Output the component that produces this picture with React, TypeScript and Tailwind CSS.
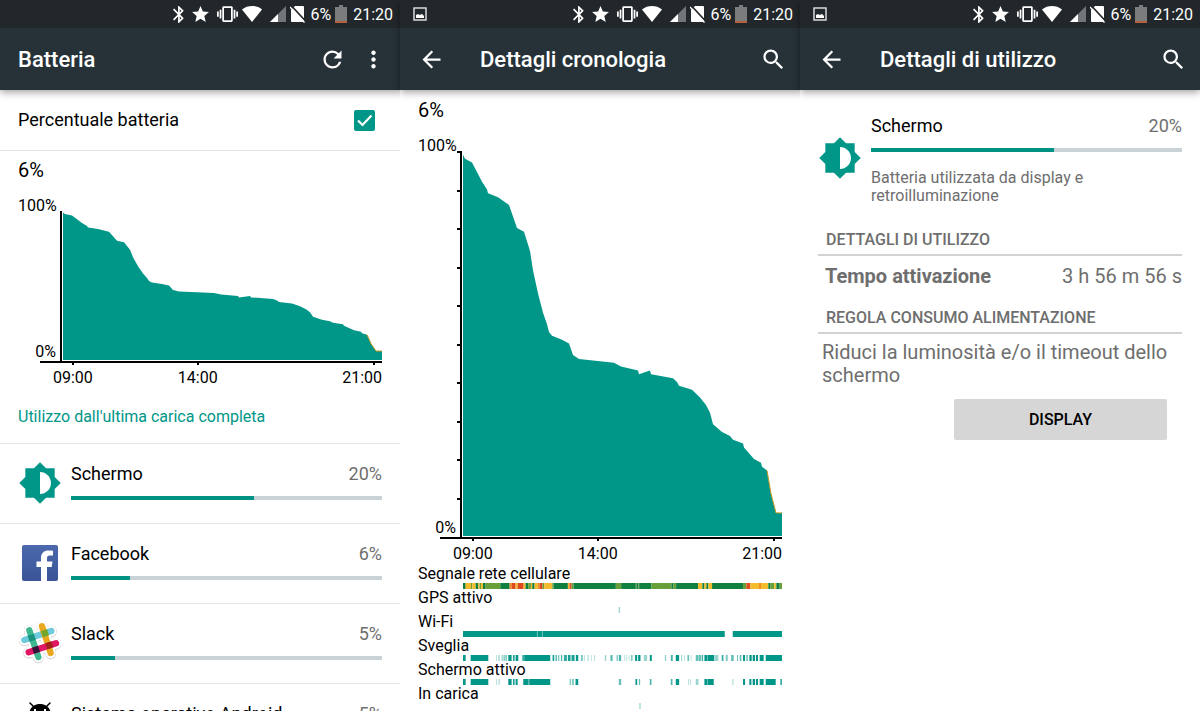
import React, { useState } from 'react';
import { MdArrowBack, MdBrightness6, MdMoreVert, MdRefresh, MdSearch } from 'react-icons/md';

// [position on the time axis, battery level in %]
const LEVELS: [number, number][] = [
  [0, 99], [2, 98], [9, 97], [15, 94], [19, 92], [24, 90], [25, 89], [35, 88], [46, 86], [50, 83],
  [54, 80], [61, 79], [67, 74], [70, 69], [75, 63], [80, 58], [84, 55], [86, 53], [89, 52], [99, 51],
  [106, 50], [110, 47], [116, 46], [151, 45], [158, 44], [175, 43], [176, 42], [187, 43], [188, 42],
  [210, 41], [214, 40], [216, 39], [229, 38], [237, 36], [243, 34], [247, 32], [250, 29], [259, 27],
  [267, 26], [270, 25], [280, 24], [281, 23], [291, 20], [298, 19], [299, 18], [304, 17], [308, 11],
  [309, 10], [313, 6], [319, 6],
];

const AXIS_STEPS = [0, 1, 2, 3, 4, 5, 6, 7, 8, 9];

const TIMELINE_END = 958;

const SIGNAL_COLORS: Record<string, string> = {
  g: '#0f8040',
  l: '#689f38',
  y: '#f4bc2c',
  o: '#ef8a24',
  r: '#dd4a20',
};

const SIGNAL: [number, string][] = [
  [0, 'g'], [8, 'y'], [24, 'l'], [28, 'y'], [38, 'g'], [46, 'y'], [50, 'l'], [54, 'y'], [60, 'g'],
  [68, 'l'], [112, 'g'], [140, 'o'], [146, 'r'], [158, 'y'], [164, 'r'], [182, 'y'], [188, 'g'],
  [196, 'l'], [204, 'y'], [208, 'g'], [215, 'y'], [225, 'o'], [230, 'r'], [239, 'l'], [244, 'y'],
  [268, 'l'], [272, 'g'], [315, 'y'], [320, 'r'], [326, 'l'], [332, 'g'], [459, 'l'], [475, 'g'],
  [519, 'l'], [521, 'g'], [527, 'l'], [529, 'g'], [566, 'l'], [626, 'g'], [632, 'l'], [640, 'g'],
  [706, 'y'], [719, 'g'], [725, 'y'], [731, 'g'], [737, 'y'], [748, 'g'], [841, 'l'], [851, 'r'],
  [863, 'y'], [889, 'o'], [895, 'y'], [917, 'g'], [923, 'l'], [935, 'y'], [941, 'g'], [951, 'l'],
];

// [start, width, opacity]
type Span = [number, number, number];

const GPS: Span[] = [[468, 3, 0.5]];
const CHARGING: Span[] = [[530, 3, 0.5]];
const WIFI: Span[] = [[0, 222, 1], [222, 2, 0.6], [224, 13, 1], [237, 2, 0.6], [239, 547, 1], [810, 148, 1]];
const AWAKE: Span[] = [
  [0, 8, 1], [23, 53, 1], [100, 2, 0.4], [106, 4, 0.4], [116, 3, 0.5], [122, 3, 0.7], [128, 3, 0.8],
  [136, 10, 1], [150, 5, 0.9], [158, 8, 1], [178, 6, 0.8], [184, 78, 1], [269, 5, 0.9], [278, 4, 0.7],
  [286, 3, 0.7], [294, 4, 0.7], [303, 9, 0.8], [315, 8, 0.9], [326, 9, 0.9], [339, 7, 1], [354, 6, 0.5],
  [364, 2, 0.4], [374, 3, 0.4], [384, 2, 0.4], [394, 2, 0.4], [426, 4, 0.4],
  [443, 6, 0.7], [461, 4, 0.5], [468, 7, 0.7], [485, 2, 0.4], [491, 2, 0.4], [498, 2, 0.4],
  [505, 4, 0.6], [517, 6, 1], [526, 7, 1], [543, 10, 0.4], [561, 6, 1], [606, 4, 0.4], [624, 6, 0.7],
  [639, 10, 1], [655, 3, 0.4], [664, 2, 0.4], [674, 5, 0.6], [684, 2, 0.4], [699, 8, 0.6],
  [708, 7, 0.6], [717, 4, 0.8], [725, 8, 1], [734, 20, 1], [755, 12, 0.4], [777, 5, 0.8],
  [789, 6, 0.5], [805, 8, 0.6], [823, 3, 0.6], [831, 5, 0.6], [841, 6, 1], [851, 4, 0.7],
  [860, 7, 1], [870, 7, 1], [880, 6, 1], [891, 12, 1], [909, 49, 1],
];
const SCREEN_ON: Span[] = [
  [0, 8, 1], [23, 53, 1], [100, 2, 0.4], [107, 3, 0.4], [136, 10, 1], [150, 5, 0.9], [158, 6, 1],
  [181, 15, 1], [196, 3, 0.7], [199, 63, 1], [320, 4, 0.5], [327, 6, 0.5], [338, 8, 1], [468, 7, 0.6],
  [518, 5, 1], [528, 4, 0.6], [561, 5, 0.7], [624, 5, 0.7], [639, 10, 1], [676, 2, 0.4], [683, 2, 0.4],
  [699, 8, 0.4], [725, 8, 1], [734, 19, 1], [809, 3, 0.4], [841, 6, 1], [860, 6, 1], [870, 7, 1],
  [880, 6, 1], [891, 12, 1], [909, 30, 1], [953, 5, 0.8],
];

const StatusBar: React.FC<{ screenshot?: boolean }> = ({ screenshot }) => (
  <div className="flex h-7 items-center gap-1 bg-[#22272b] pl-[13px] pr-[7px] text-white">
    {screenshot && (
      <svg width="14" height="14" viewBox="0 0 14 14" fill="none" aria-hidden="true">
        <rect x="1" y="1" width="12" height="12" stroke="#e4e6e7" strokeWidth="1.4" />
        <path d="M3 11V8l2-1 1.500 1L9 7l2 2v2z" fill="#fff" />
      </svg>
    )}
    <div className="ml-auto flex items-center gap-2" aria-hidden="true">
      <svg width="11" height="17" viewBox="5 2 13 20" fill="currentColor">
        <path d="M17.71 7.710L12 2h-1v7.590L6.410 5 5 6.410 10.590 12 5 17.590 6.410 19 11 14.410V22h1l5.710-5.710-4.300-4.290 4.300-4.290zM13 5.830l1.880 1.880L13 9.590V5.830zm1.880 10.460L13 18.170v-3.760l1.880 1.880z" />
      </svg>
      <svg width="17" height="16" viewBox="2 2 20 19" fill="currentColor">
        <path d="M12 17.270L18.180 21l-1.640-7.030L22 9.240l-7.190-.61L12 2 9.190 8.630 2 9.240l5.460 4.730L5.820 21z" />
      </svg>
      <div className="flex items-center gap-1">
        <svg width="21" height="16" viewBox="0 3 24 18" fill="currentColor">
          <path d="M0 15h2V9H0v6zm3 2h2V7H3v10zm19-8v6h2V9h-2zm-3 8h2V7h-2v10zM16.500 3h-9C6.670 3 6 3.670 6 4.500v15c0 .83.67 1.500 1.500 1.500h9c.83 0 1.500-.67 1.500-1.500v-15c0-.83-.67-1.500-1.500-1.500zM16 19H8V5h8v14z" />
        </svg>
        <svg width="20" height="16" viewBox="0 0 20 16" fill="currentColor">
          <path d="M10 16L0 3.500C3 1 6.500 0 10 0s7 1 10 3.500z" />
        </svg>
      </div>
      <svg width="16" height="16" viewBox="0 0 16 16">
        <path d="M16 0v16H0z" fill="#71767a" />
        <path d="M8 8v8H0z" fill="#fff" />
      </svg>
    </div>
    <svg width="15" height="17" viewBox="0 0 15 17" aria-hidden="true">
      <path d="M5 0h8q1 0 1 1v15H2q-1 0-1-1V4z" fill="#fff" />
      <path d="M1.500 0L15.500 15" stroke="#22272b" strokeWidth="1.800" />
      <path d="M0 1L14.500 16.500" stroke="#fff" strokeWidth="1.300" />
    </svg>
    <span className="ml-px pt-px text-base leading-none">6%</span>
    <svg width="12" height="18" viewBox="0 0 12 18" aria-hidden="true">
      <path d="M4 0h4v2h4v16H0V2h4z" fill="#7a7c7e" />
      <path d="M0 16h12v2H0z" fill="#b5623c" />
    </svg>
    <span className="ml-[2px] pt-px text-base leading-none">21:20</span>
  </div>
);

interface ScreenProps {
  title: string;
  back?: boolean;
  actions: React.ReactNode;
  children: React.ReactNode;
}

const Screen: React.FC<ScreenProps> = ({ title, back, actions, children }) => (
  <section className="min-w-0 bg-white">
    <header className="shadow-[0_2px_8px_rgba(0,0,0,0.4)]">
      <StatusBar screenshot={back} />
      <div className="flex h-[62px] items-center bg-[#263238] pl-[18px] pr-[13px] text-white">
        {back && (
          <button type="button" aria-label="Indietro" className="mr-[35px]">
            <MdArrowBack size={27} />
          </button>
        )}
        <h1 className="flex-1 truncate text-[22px] font-medium">{title}</h1>
        <div className="flex gap-[14px]">{actions}</div>
      </div>
    </header>
    {children}
  </section>
);

const SearchButton = () => (
  <button type="button" aria-label="Cerca">
    <MdSearch size={27} />
  </button>
);

const BatteryChart: React.FC<{ height: number; ticks?: boolean }> = ({ height, ticks }) => {
  const scale = (height - 1) / 100;
  const points = LEVELS.map(([x, level]) => [x + 7, height - 1 - level * scale]);
  const line = points.map((p) => p.join(' ')).join(' L');
  const low = points.slice(-5).map((p) => p.join(' ')).join(' L');

  return (
    <figure className="px-[18px] text-base">
      <div className="flex items-stretch">
        <div className="flex w-[38px] flex-col justify-between text-right leading-[18px]">
          <span>100%</span>
          <span>0%</span>
        </div>
        <svg
          className="mt-[14px] min-w-0 flex-1"
          height={height}
          viewBox={`0 0 326 ${height}`}
          preserveAspectRatio="none"
          aria-label="Livello batteria"
        >
          <path d={`M7 ${height - 1} L${line} L326 ${height - 1} Z`} fill="#009688" />
          <path d={`M${low}`} fill="none" stroke="#c49a25" strokeWidth="1" />
          <rect x="4" y="0" width="2" height={height} fill="#000" />
          {ticks &&
            AXIS_STEPS.map((step) => (
              <rect key={step} x="1" y={Math.round(step * 10 * scale)} width="3" height="2" fill="#000" />
            ))}
        </svg>
      </div>
      <div className="ml-[22px] h-[2px] bg-black" />
      <svg className="block w-full pl-[38px]" height="2" viewBox="0 0 326 2" preserveAspectRatio="none" aria-hidden="true">
        <path d="M16 0h2v2h-2zM141 0h2v2h-2zM317 0h2v2h-2z" />
      </svg>
      <div className="flex pl-[35px] pt-[3px] leading-5">
        <span>09:00</span>
        <span className="ml-[85px]">14:00</span>
        <span className="ml-auto">21:00</span>
      </div>
    </figure>
  );
};

const SignalBar = () => (
  <svg className="block w-full" height="6" viewBox={`0 0 ${TIMELINE_END} 6`} preserveAspectRatio="none" aria-hidden="true">
    {SIGNAL.map(([start, color], i) => {
      const end = i < SIGNAL.length - 1 ? SIGNAL[i + 1][0] : TIMELINE_END;
      return <rect key={start} x={start} y="0" width={end - start} height="6" fill={SIGNAL_COLORS[color]} />;
    })}
  </svg>
);

const SpanBar: React.FC<{ spans: Span[] }> = ({ spans }) => (
  <svg className="block w-full" height="6" viewBox={`0 0 ${TIMELINE_END} 6`} preserveAspectRatio="none" aria-hidden="true">
    {spans.map(([start, width, opacity]) => (
      <rect key={start} x={start} y="0" width={width} height="6" fill="#009688" opacity={opacity} />
    ))}
  </svg>
);

const Timeline: React.FC<{ label: string; children: React.ReactNode }> = ({ label, children }) => (
  <li>
    <div className="leading-[18px]">{label}</div>
    <div className="pl-[45px]">{children}</div>
  </li>
);

const Usage: React.FC<{ name: string; percent: number; fill: number }> = ({ name, percent, fill }) => (
  <div>
    <div className="flex justify-between text-lg leading-6">
      <span className="text-black">{name}</span>
      <span className="text-[#6e6e6e]">{percent}%</span>
    </div>
    <div
      className="mt-[10px] h-1 bg-[#c9d2d6]"
      role="progressbar"
      aria-label={name}
      aria-valuenow={percent}
    >
      <div className="h-full bg-[#009282]" style={{ width: `${fill}%` }} />
    </div>
  </div>
);

const DisplayIcon = () => <MdBrightness6 size={44} color="#009688" className="shrink-0" />;

const FacebookIcon = () => (
  <svg width="36" height="36" viewBox="0 0 36 36" className="shrink-0" aria-hidden="true">
    <defs>
      <linearGradient id="fb" x1="0" y1="0" x2="0" y2="1">
        <stop offset="0" stopColor="#4c69ae" />
        <stop offset="1" stopColor="#3a5496" />
      </linearGradient>
    </defs>
    <rect width="36" height="36" rx="2" fill="url(#fb)" />
    <path d="M19 36V22h-4.500v-5.500H19v-3.500c0-5 3-7.500 7.500-7.500 1.800 0 3.500.2 4.500.3v4.700h-3c-2.500 0-3 1.200-3 2.800v3.200h5.500l-.8 5.500H25v14z" fill="#fff" />
  </svg>
);

const SlackIcon = () => (
  <svg width="42" height="42" viewBox="57 101 126 126" fill="none" strokeLinecap="round" className="shrink-0" aria-hidden="true">
    <g stroke="#fff" strokeWidth="32" className="drop-shadow-[0_1px_1px_rgba(0,0,0,0.4)]">
      <path d="M88 126L115 206M126 114L152 194M73 155L154 128M86 192L168 165" />
    </g>
    <g strokeWidth="19">
      <path d="M73 155L154 128" stroke="#6ecadc" />
      <path d="M88 126L115 206" stroke="#3eb890" />
      <path d="M126 114L152 194" stroke="#e9a820" />
      <path d="M86 192L168 165" stroke="#e01563" />
    </g>
    <path d="M83 142l18-6 6 18-18 6z" fill="#1a937d" />
    <path d="M123 129l18-6 6 18-18 6z" fill="#70a62e" />
    <path d="M96 178l18-6 6 18-18 6z" fill="#361238" />
    <path d="M136 165l18-6 6 18-18 6z" fill="#a3201a" />
  </svg>
);

const AndroidIcon = () => (
  <svg width="42" height="42" viewBox="0 0 42 42" className="shrink-0" aria-hidden="true">
    <path d="M14 4L11 1M28 4L31 1" stroke="#000" strokeWidth="1.500" strokeLinecap="round" />
    <path d="M10 13C10 6 15 2 21 2S32 6 32 13zM10 15h22v17H10zM5 15h4v12H5zM33 15h4v12h-4zM14 32h5v8h-5zM23 32h5v8h-5z" />
    <path d="M15 7h2v3h-2zM25 7h2v3h-2z" fill="#fff" />
  </svg>
);

const apps = [
  { name: 'Schermo', percent: 20, fill: 59, icon: <DisplayIcon /> },
  { name: 'Facebook', percent: 6, fill: 19, icon: <FacebookIcon /> },
  { name: 'Slack', percent: 5, fill: 14, icon: <SlackIcon /> },
  { name: 'Sistema operativo Android', percent: 5, fill: 13, icon: <AndroidIcon /> },
];

const App: React.FC = () => {
  const [showPercent, setShowPercent] = useState(true);

  return (
    <main className="grid h-screen grid-cols-3 overflow-hidden bg-white font-[Roboto,sans-serif] text-black">
      <Screen
        title="Batteria"
        actions={
          <>
            <button type="button" aria-label="Aggiorna">
              <MdRefresh size={27} />
            </button>
            <button type="button" aria-label="Altre opzioni">
              <MdMoreVert size={27} />
            </button>
          </>
        }
      >
        <label className="flex h-[61px] items-center justify-between border-b border-[#e4e4e4] pl-[18px] pr-[25px] text-lg">
          Percentuale batteria
          <span className="grid">
            <input
              type="checkbox"
              checked={showPercent}
              onChange={(e) => setShowPercent(e.target.checked)}
              className="col-start-1 row-start-1 size-[21px] appearance-none rounded-xs border-2 border-[#009688] checked:bg-[#009688]"
            />
            {showPercent && (
              <svg className="pointer-events-none col-start-1 row-start-1" width="21" height="21" viewBox="0 0 21 21" fill="none" aria-hidden="true">
                <path d="M4 10.500L8.500 15L17.500 5.500" stroke="#fff" strokeWidth="2.200" />
              </svg>
            )}
          </span>
        </label>
        <p className="mb-[15px] mt-[7px] px-[18px] text-xl leading-6">6%</p>
        <BatteryChart height={150} />
        <h2 className="mb-[14px] mt-[17px] px-[18px] text-base text-[#009688]">
          Utilizzo dall'ultima carica completa
        </h2>
        <ul>
          {apps.map((app) => (
            <li key={app.name} className="flex h-20 items-center border-t border-[#e4e4e4] pr-[18px]">
              <div className="flex w-[71px] justify-center pb-[2px] pl-2">{app.icon}</div>
              <div className="min-w-0 flex-1 pb-[5px]">
                <Usage name={app.name} percent={app.percent} fill={app.fill} />
              </div>
            </li>
          ))}
        </ul>
      </Screen>

      <Screen title="Dettagli cronologia" back actions={<SearchButton />}>
        <p className="mb-[15px] px-[18px] pt-2 text-xl leading-6">6%</p>
        <BatteryChart height={386} ticks />
        <ul className="mt-px px-[18px] text-base">
          <Timeline label="Segnale rete cellulare">
            <SignalBar />
          </Timeline>
          <Timeline label="GPS attivo">
            <SpanBar spans={GPS} />
          </Timeline>
          <Timeline label="Wi-Fi">
            <SpanBar spans={WIFI} />
          </Timeline>
          <Timeline label="Sveglia">
            <SpanBar spans={AWAKE} />
          </Timeline>
          <Timeline label="Schermo attivo">
            <SpanBar spans={SCREEN_ON} />
          </Timeline>
          <Timeline label="In carica">
            <SpanBar spans={CHARGING} />
          </Timeline>
        </ul>
      </Screen>

      <Screen title="Dettagli di utilizzo" back actions={<SearchButton />}>
        <div className="px-[18px] pt-6 text-[#6e6e6e]">
          <div className="flex">
            <div className="w-[53px] pt-[22px]">
              <DisplayIcon />
            </div>
            <div className="min-w-0 flex-1">
              <Usage name="Schermo" percent={20} fill={59} />
              <p className="mt-[17px] pr-20 text-base leading-[18px]">
                Batteria utilizzata da display e retroilluminazione
              </p>
            </div>
          </div>
          <h2 className="mt-[23px] border-b-2 border-[#d2d2d2] px-2 pb-[2px] text-base font-medium uppercase">
            Dettagli di utilizzo
          </h2>
          <dl className="flex justify-between pl-[7px] pt-2 text-xl leading-6">
            <dt className="font-bold">Tempo attivazione</dt>
            <dd>3 h 56 m 56 s</dd>
          </dl>
          <h2 className="mt-[18px] border-b-2 border-[#d2d2d2] px-2 pb-[2px] text-base font-medium uppercase">
            Regola consumo alimentazione
          </h2>
          <p className="px-1 pt-[7px] text-xl leading-[23px]">
            Riduci la luminosità e/o il timeout dello schermo
          </p>
          <div className="mt-3 flex justify-end pr-[15px]">
            <button type="button" className="h-[41px] w-[213px] rounded-xs bg-[#d6d6d6] text-base font-medium text-black">
              DISPLAY
            </button>
          </div>
        </div>
      </Screen>
    </main>
  );
};

export default App;
